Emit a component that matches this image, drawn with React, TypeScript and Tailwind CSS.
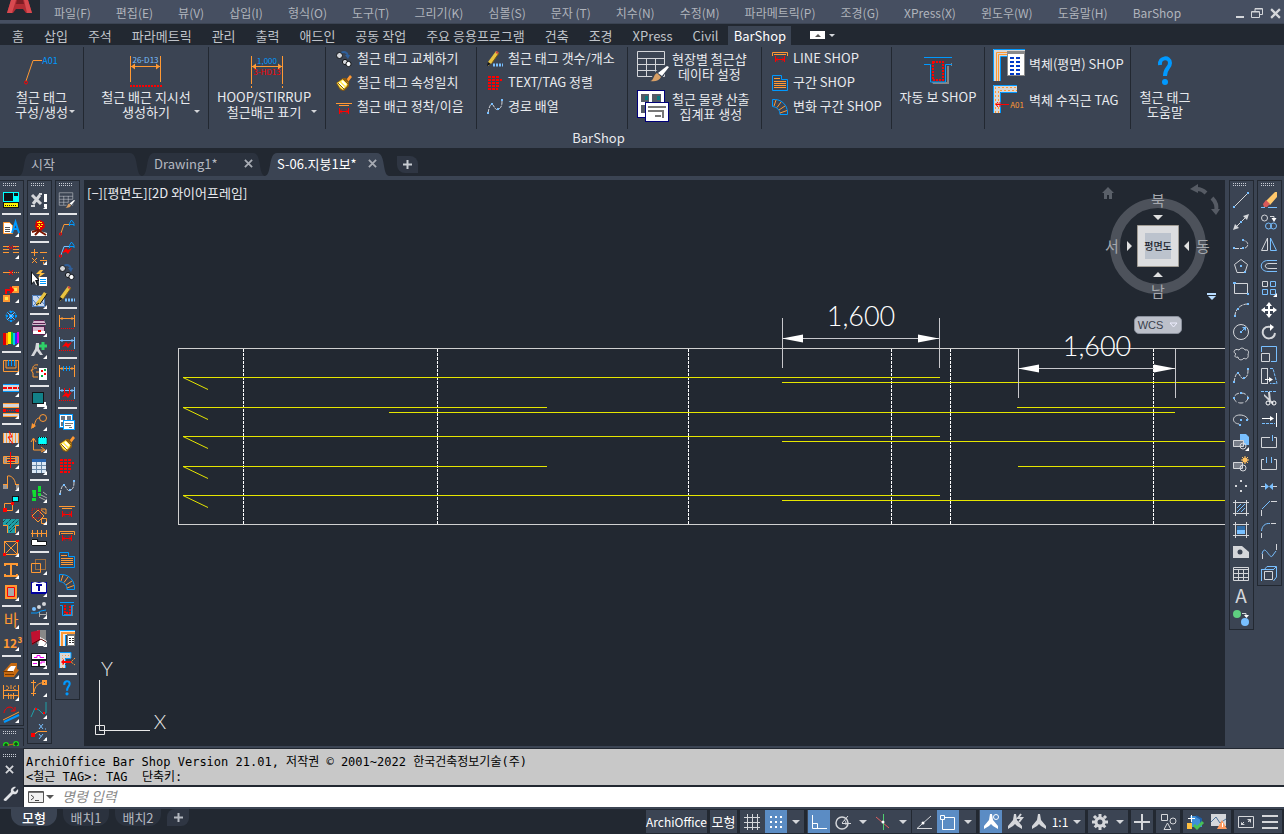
import type { ReactNode } from 'react';

const O = '#ff9933';
const R = '#ff0000';
const B = '#0099ff';
const L = '#78bfff';
const G = '#d4d6da';
const W = '#ffffff';
const K = '#111418';

// stroked path / filled path
const S = ({ c, d, w = 1, dash }: { c: string; d: string; w?: number; dash?: string }) => (
  <path d={d} stroke={c} strokeWidth={w} strokeDasharray={dash} fill="none" />
);
const F = ({ c, d }: { c: string; d: string }) => <path d={d} fill={c} />;
const T = ({ c, x, y, s, children }: { c: string; x: number; y: number; s: number; children: ReactNode }) => (
  <text x={x} y={y} fill={c} fontSize={s} textAnchor="middle">{children}</text>
);

const balls = (
  <>
    <S c="#2f5f9a" w={2} d="M5 2C8 0 11 1 12 5" />
    <F c="#2f5f9a" d="M9 4h5l-2 4z" />
    <circle cx="3.5" cy="4.5" r="3" fill={G} stroke={K} />
    <circle cx="9" cy="11" r="2.6" fill={G} stroke={K} />
    <circle cx="12.5" cy="13" r="2.6" fill={W} stroke={K} />
  </>
);
const brush = (
  <>
    <F c={O} d="M10 5l4-5 2 2-4 5z" />
    <F c="#8a5a10" d="M0 8l7-5h3l3 4v4l-5 5-4-1z" />
    <F c="#ffe94d" d="M1 8l6-4 5 4-1 3-4 4-3-2z" />
    <S c={W} w={2} d="M3 8l5 5M6 6l4 4" />
    <S c="#8a5a10" d="M2 8l6 6M7 4l5 5" />
  </>
);
const pencil = (
  <>
    <F c="#e8c341" d="M1 11L9 0l3 2-7 10-4 3z" />
    <S c="#7a5b10" d="M5 12L12 2" />
    <F c={K} d="M0 15l1-4 3 2z" />
    <S c="#c44" w={2} d="M9 1l2 1" />
    <S c={L} w={3} dash="2 1" d="M6 14h10" />
  </>
);
const bricks = <S c={R} w={2} dash="3 1" d="M1 2h12M1 5h14M1 8h12M1 11h12M1 14h10" />;
const spline = (
  <>
    <S c={G} dash="4 1" d="M1 14C2 8 4 3 6 6S9 12 12 10s3-5 3-9" />
    <F c={L} d="M0 13h2v2h-2zM4 4h2v2H4zM10 9h2v2h-2zM14 0h2v2h-2z" />
  </>
);
const splice = (
  <>
    <S c={O} d="M0 4.500h16M3 6.500h10" />
    <S c={R} d="M3.500 9v6M12.500 9v6M4 12.500h8M6 10.500l-2 2 2 2M10 10.500l2 2-2 2" />
  </>
);
const lineShop = (
  <>
    <S c={O} d="M.5 5V1.500h15V5M2 3.500h12" />
    <S c={R} d="M3.500 5v6M12.500 5v6M4 8.500h8M6 6.500l-2 2 2 2M10 6.500l2 2-2 2" />
  </>
);
const section = (
  <>
    <S c={B} d="M.5.5h9v4h6v11H.5z" />
    <S c={O} d="M2 3.500h6M2 6.500h12M2 8.500h12M2 10.500h12M2 12.500h12" />
  </>
);
const fan = (
  <>
    <S c={B} d="M.5 .5h3C10 1 15 6 15.500 13v2.500H8C8 11 5 8 .5 7.500z" />
    <S c={O} d="M4 1L2 7M9 3L5 8.500M13 7L7 11M15 11.500l-7 2.500" />
  </>
);
const tableBrush = (
  <>
    <S c={G} d="M.5 1.500h27v25H.5zM.5 8.500h27M.5 14.500h27M.5 20.500h27M9.500 8v18M18.500 8v18" />
    <F c="#3b4453" d="M19 21L29 14h3v4L23 31H12z" />
    <F c="#d9a066" d="M13 31c4 0 3-6 7-8l4 4c-2 4-6 5-11 4z" />
    <F c={W} d="M21 23L30 16l2 1-7 9z" />
  </>
);
const tables = (
  <>
    <F c="#00007a" d="M0 0h28v28H0z" />
    <F c={W} d="M1 1h26v26H1z" />
    <F c="#555c66" d="M4 4h8v8H4zM15 4h9v8h-9zM4 15h8v8H4z" />
    <F c="#0a7a80" d="M8 6h3v4H8zM20 6h3v4h-3z" />
    <F c="#00007a" d="M8 12h24v20H8z" />
    <F c={W} d="M9 13h22v18H9z" />
    <S c="#777" w={2} d="M11 17h18M11 21h16M18 26h6M26 22v6" />
  </>
);
const wall = (
  <>
    <F c="#d8d8d8" d="M0 0h32v7H8v25H0z" />
    <S c={B} d="M.5 32V.5H32M7.500 32V7.500H14" />
    <S c={O} d="M3.500 32V3.500H14M5.500 32V5.500H14" />
    <F c="#8a8a8a" d="M14 2h18v25H14z" />
    <F c={W} d="M15 5h16v21H15z" />
    <S c="#0038c8" w={2} dash="4 2" d="M17 9h12M17 13h12M17 17h12M17 21h12M17 25h12" />
  </>
);
const wallTag = (
  <>
    <F c="#d8d8d8" d="M0 0h24v7H7v21H0z" />
    <S c={B} d="M.5 28V.5H24M7.500 28V7.500H24" />
    <S c={O} dash="2 2" d="M2.500 28V2.500H24M5.500 28V5.500H24" />
    <S c={R} d="M3 19.500h13M5 17l-2 2.500 2 2.500M7 17v5" />
    <T c={O} x={24} y={23} s={8}>A01</T>
  </>
);
const beam = (
  <>
    <F c="#858585" d="M8 26h15V10h4v-3H28v3h-3v18H9z" />
    <F c="#3b4453" d="M8 8h14v18H8z" />
    <S c={B} d="M0 1.500h28M0 8.500h6.500v17.500h15V8.500H28" />
    <S c={R} w={2} dash="2 1" d="M9 6h10v18H9z" />
  </>
);
const question = (
  <>
    <S c={B} w={4} d="M3 9C2 1 13 0 13 7c0 5-5 5-5 13" />
    <circle cx="8" cy="26" r="3" fill={B} />
  </>
);
const dim = (c: string, mark: ReactNode) => (
  <>
    <S c={c} d="M.5 1v12M15.500 1v12M1 4.500h14M3 3v3M13 3v3" />
    {mark}
  </>
);
const dots = <S c={R} dash="1 1" d="M0 14.500h16" />;
const bolt = <F c={R} d="M3 11l4-5 2 2 4-2-4 6-2-2z" />;
const leader = (c: string) => (
  <>
    <S c={c} d="M2 13L5 4.500h6" />
    <S c={B} d="M10.500 6V3.500L12 .5h1l2 3V6M11 4.500h4" />
    <circle cx="1.500" cy="14" r="1.200" stroke={R} fill="none" />
  </>
);

const small: Record<string, ReactNode> = {
  screen: <><F c="#00ffff" d="M0 0h16v10H0z" /><F c={K} d="M1 1h9v8H1zM11 1h4v3h-4zM0 10h16v6H0z" /><F c="#fff200" d="M1 11h14v4H1z" /><S c={K} dash="1 1" d="M2 13.500h12" /></>,
  docText: <><F c={W} d="M.5 2.500h6l3 3v8h-9z" /><S c={O} d="M.5 2.500h6l3 3v8h-9z" /><S c="#555" d="M2 7.500h5M2 9.500h5M2 11.500h5" /><S c={B} w={2} d="M9 13l3.500-11L16 13M10 9h5" /></>,
  trim: <><S c={O} d="M0 4.500h6M0 7.500h6M0 10.500h6M10 4.500h6M10 7.500h6M10 10.500h6" /><S c={R} dash="1 1" d="M4 5.500h9M6 3l4 5M10 3L6 8" /></>,
  cutLine: <><S c={O} d="M0 8.500h8" /><S c={O} dash="1 1" d="M9 8.500h7" /><S c={R} d="M6 6l4 5M10 6l-4 5" /></>,
  moveBox: <><F c="#ffe94d" d="M0 9h7v7H0zM9 0h7v7H9z" /><S c={O} w={2} d="M1 10h5v5H1zM10 1h5v5h-5z" /><S c={R} w={2} d="M3 8V4h6M7 1l3 3-3 3" /></>,
  snow: <><S c={B} w={2} dash="2 1" d="M8 3v11M3 8h11" /><S c={L} d="M4 4l8 8M12 4l-8 8" /><circle cx="8" cy="8" r="5" stroke={B} strokeDasharray="2 1" fill="none" /></>,
  stripes: <><F c="#e00000" d="M0 3h3v12H0z" /><F c="#ff9900" d="M3 3h2v12H3z" /><F c="#fff200" d="M5 2h3v12H5z" /><F c="#00c040" d="M8 2h2v12H8z" /><F c="#00d0e0" d="M10 3h2v12h-2z" /><F c="#2030ff" d="M12 3h2v11h-2z" /><F c="#e000e0" d="M14 2h2v11h-2z" /></>,
  stirrup: <><S c={O} d="M.5 2.500h15v11H.5zM3 2v8h10V2" /><S c={B} d="M5.500 2v6M8.500 2v6M11.500 2v6" /></>,
  band: <><F c={G} d="M0 4h16v8H0z" /><S c={B} d="M0 4.500h16M0 11.500h16" /><S c={R} w={2} dash="4 1" d="M0 8h16" /></>,
  bandDots: <><F c={G} d="M0 2h16v12H0z" /><F c="#3b4453" d="M0 5h16v6H0z" /><S c={O} d="M0 1.500h16M0 5.500h16M0 11.500h16M0 14.500h16" /><S c={R} dash="1 1" d="M2 8.500h12" /><F c={R} d="M0 7h3v3H0zM13 7h3v3h-3z" /></>,
  column: <><F c={G} d="M0 3h16v10H0z" /><S c={O} d="M.5 3v10M3.500 3v10M12.500 3v10M15.500 3v10M6.500 3v10M9.500 3v10" /><S c={R} d="M6 1l3 6H5l5 7" /></>,
  wallCut: <><F c="#999" d="M0 5h4v6H0zM12 5h4v6h-4z" /><S c={O} d="M.5 4.500h15v7H.5zM3 6.500h10v3H3z" /><S c={R} d="M7.500 0v16M5 8.500h7" /></>,
  door: <><F c="#999" d="M0 10h5v5H0zM13 10h3v5h-3z" /><S c={O} d="M4.500 14V2C8 1 12 5 12.500 10M0 10.500h5M12 10.500h4" /></>,
  boxCyan: <><S c={O} d="M1.500 7.500h8v7h-8z" /><F c={K} d="M9 0h7v6H9z" /><F c="#00ffff" d="M10 1h5v4h-5z" /><F c={R} d="M0 12h4v4H0zM8 6h3v3H8z" /></>,
  hatchT: <><F c="#1fa0a8" d="M0 1h16v6h-4v8H5V7H0z" /><S c={K} dash="1 1" d="M0 4L3 1M3 6l5-5M6 8l7-7M6 12L16 2M7 14l5-5" /><S c={O} d="M0 7.500h4.500V15M12.500 15V7.500H16" /></>,
  crossBox: <><S c={O} d="M1.500 1.500h13v13h-13zM1 1l14 14M15 1L1 15" /><F c={R} d="M13 0h3v2h-3zM0 13h3v3H0z" /></>,
  iBeam: <S c={O} w={2} d="M2 2h12M8 2v12M2 14h12M2 1v3M14 1v3M2 12v3M14 12v3" />,
  columnBox: <><F c="#aaa" d="M2 1h12v14H2z" /><S c={O} w={2} d="M3 2h10v12H3z" /><S c={R} d="M4.500 3.500h7v9h-7z" /></>,
  ba: <T c={O} x={8} y={14} s={16}>바</T>,
  num: <text x="0" y="14" fill={O} className="text-[12px] font-bold">12³</text>,
  bed: <><F c="#c76a10" d="M1 9l7-8h6v6l2 1-5 7H1z" /><F c={W} d="M5 7l3-3h5l-3 6H4z" /><S c="#7a3a00" d="M0 9.500h10M2 12.500h9" /></>,
  fence: <S c={O} d="M.5 1v14M15.500 1v14M0 6.500h16M0 11.500h16M5.500 9v6M10.500 9v6M3 2c4 0 3 4 0 4M13 2c-4 0-3 4 0 4M8 1v4M8 10v5" />,
  slope: <><S c={R} d="M1 7C2 0 10-1 11 5M8 5h4V1" /><S c={O} d="M0 14L16 6" /><S c={B} w={2} d="M1 16L16 9" /></>,
  nodes: <><circle cx="3" cy="5" r="3" fill="#18e018" /><circle cx="13" cy="4" r="3" fill="#18e018" /><S c={K} d="M3 3v4M1 5h4M13 2v4M11 4h4" /><S c="#c76a10" d="M5 5l6-1M13 6v4" /><S c={B} d="M0 9.500h12" /></>,

  cross: <><S c={G} w={3} d="M1 3l9 9M9 3L2 12" /><S c={G} w={2} d="M0 14h4M8 2h3" /><F c={W} d="M13 2h3v8h-3zM13 12h3v3h-3z" /></>,
  fire: <><F c="#e00000" d="M4 6l1-5 4-1 4 2 1 5-4 4H6z" /><S c="#fff200" dash="2 1" d="M6 2.500h6M7 4.500h6M6 6.500h6M8.500 1v9" /><F c={W} d="M0 11l4-1 5 1 7 2v3H0z" /><S c="#7a1500" w={2} d="M1 12l6-2 8 5M4 15l5-5" /></>,
  calc: <S c={O} d="M0 4.500h7M3.500 1v7M9 4.500h7M1 10l5 5M6 10l-5 5M9 12.500h7M12.500 9v2M12.500 14v2" />,
  cursor: <><F c="#ffc040" d="M9 0L5 4h4L7 8l7-5h-4l2-3z" /><F c={K} d="M0 1l9 10H6l2 4-3 1-2-4-3 3z" /><F c={W} d="M1 3l6 7H4l2 5-1 .5L3 11l-2 2z" /><F c={W} d="M8 7h8v9H8z" /><S c={B} d="M9 9.500h6M9 11.500h6M9 13.500h6" /></>,
  editBox: <><F c="#c8d8f0" d="M1 3h13v12H1z" /><S c="#4a7ab8" d="M1.500 3.500h12v11h-12zM2 8l6 7M6 4l8 9M2 14L13 4" /><F c="#e8c341" d="M5 11L13 0l3 2-7 10-4 2z" /><S c={K} d="M5 13l3-2M9 12l7-10" /></>,
  printer: <><F c="#d8b8d0" d="M3 0h10l2 5H1z" /><S c="#5a2050" d="M3 .5h10M2 3.500h12M1 6.500h13M1.500 6v6h12V6M2 14.500h13" /><F c="#d8b8d0" d="M2 7h11v4H2z" /><F c={W} d="M2 11h12v3H2z" /><S c={R} w={2} d="M7 11h3" /></>,
  compass: <><F c={G} d="M5 1h3v6l4 6h-3l-3-4-3 5H0l4-7z" /><S c="#2fd068" w={3} d="M12 0v8M8 4h8" /></>,
  face: <><S c={O} d="M7 1C3 0 1 3 2 6H0l2 3v4h5M3 4h3M5 8h3" /><F c={W} d="M8 4h8v12H8z" /><F c={R} d="M10 6h2v2h-2zM13 9h2v2h-2z" /><F c="#00b040" d="M10 11h2v2h-2zM13 5h2v2h-2z" /></>,
  block: <><F c={W} d="M6 10h9v5H6z" /><F c={K} d="M1 0h12v12H1z" /><F c="#128088" d="M2 1h10v10H2z" /></>,
  bubble: <><circle cx="12" cy="4" r="3.500" stroke={O} fill="none" /><S c={O} d="M9 4C4 4 5 8 2 14" /><F c={O} d="M0 15l1-6 4 3z" /></>,
  axis: <><F c="#00ffff" d="M7 1h9v7H7z" /><S c={K} dash="1 1" d="M7 1.500h9v7H7z" /><S c={O} d="M2.500 3v11H13M0 6l2.500-4L5 6M10 11l4 3-4 2" /></>,
  sheet: <><F c="#dce8f5" d="M1 1h14v14H1z" /><F c="#2a66b0" d="M1 1h14v3H1z" /><S c="#6888a8" d="M1 7.500h14M1 11.500h14M5.500 4v11M10.500 4v11" /></>,
  feet: <><F c="#10e030" d="M1 4h4v7H2zM1 12h4v3H1zM7 0h3v6H7zM7 7h3v3H7z" /><S c="#aaa" d="M8 11l8 4M12 6l4 3M10 9l6 3" /></>,
  rotateBox: <><S c={O} d="M7 2l6 6-6 6-6-6zM10.500 10.500h5v5h-5zM10 2l5 4V1h-5" /><S c={R} dash="1 1" d="M1 1h8v9H1z" /></>,
  dimWall: <><S c={O} d="M0 3.500h16M1.500 0v7M6.500 0v7M10.500 0v7M15.500 0v7" /><F c={W} d="M0 9h6v3h10v4H0z" /><S c={K} d="M.5 9.500h6v2h9v4H.5z" /></>,
  dotBoxes: <><S c={O} d="M.5 5.500h9v9h-9z" /><S c={O} dash="1 1" d="M4.500 1.500h10v10h-10z" /></>,
  book: <><F c="#0000a0" d="M0 2h16v12H0z" /><F c={W} d="M1 3l3-1 4 1 4-1 3 1v9H1z" /><S c="#0000a0" w={2} d="M5 5h6M8 4v7" /></>,
  slider: <><circle cx="3" cy="7" r="2" fill={L} /><circle cx="8" cy="5" r="2" fill={G} /><circle cx="13" cy="2" r="2" fill={G} /><S c={B} d="M0 11h6l4-2 5-1" /><S c="#aaa" d="M8.500 10v5M15.500 10v5M9 12.500h6" /></>,
  redBook: <><F c="#888" d="M6 0h9v14H6z" /><F c={W} d="M9 7l7 4-3 5H7z" /><F c="#c01030" d="M0 2l9-2v10l-8 5z" /><S c="#500" d="M1 14l9-5 5 3" /></>,
  magTable: <><F c={K} d="M0 1h16v14H0z" /><F c={W} d="M1 2h14v5H1zM1 9h6v5H1zM9 9h6v5H9z" /><S c="#f000f0" d="M3 5.500h3v-2h3v2h4M2 11.500h4M10 12v-2h4" /></>,
  curveAxis: <><S c={O} d="M2.500 0v16M0 2.500h5M0 13.500h5M3 12C4 6 7 3 13 2.500" /><S c={O} w={2} d="M12 1h3v3h-3z" /></>,
  poly: <><S c="#1fa0a8" d="M0 15L4 6l4 2 4 4 3-1V0" /><F c={R} d="M4 6h2v2H4zM12 10h2v2h-2z" /></>,
  xy: <><S c={O} d="M1 12l6-4.500h9" /><F c={R} d="M0 9h4v4H0z" /><S c={L} d="M8 0l4 5M12 0L8 5M14 5h1M8 10l2 2.500M12 10l-4 5M14 14.500h1" /></>,

  leader: leader(O),
  leaderEdit: <>{leader(L)}{bolt}</>,
  balls,
  pencil,
  brush,
  bricks,
  spline,
  splice,
  lineShop,
  section,
  fan,
  dim: dim(O, dots),
  dimEdit: dim(L, <>{dots}{bolt}</>),
  dimTicks: dim(O, <S c={B} d="M4.500 2v5M7.500 2v5M10.500 2v5" />),
  dimTicksEdit: dim(L, <><S c={R} d="M5.500 2v5M10.500 2v5" />{bolt}{dots}</>),
  tablesSmall: <><F c={B} d="M0 0h14v14H0z" /><F c={W} d="M1 1h12v12H1z" /><F c="#6a727e" d="M2 2h4v4H2zM8 2h4v4H8zM2 8h2v4H2z" /><F c={B} d="M4 6h12v10H4z" /><F c={W} d="M5 7h10v8H5z" /><S c="#777" d="M6 9.500h8M6 11.500h6M10 13.500h3" /></>,
  wallSmall: <><F c="#e8e8e8" d="M0 0h16v5H6v11H0z" /><S c={B} d="M.5 16V.5H16M6.500 16V5" /><S c={O} w={2} d="M3 16V3h13" /><F c="#777" d="M8 4h8v12H8z" /><F c={W} d="M9 6h6v9H9z" /><S c="#333" dash="2 1" d="M10 8.500h5M10 10.500h5M10 12.500h5" /></>,
  wallTagSmall: <><F c="#d8d8d8" d="M0 0h12v6H6v10H0z" /><S c={B} d="M.5 16V.5H12V6M6.500 12V6.500H12M6.500 13v3" /><S c={O} dash="1 2" d="M3.500 16V3.500H12" /><S c={R} w={2} d="M3 10h9" /><F c={R} d="M2 10l3-3v6z" /><S c={O} dash="2 1" d="M16 6l-4 4 4 3" /></>,
  beamSmall: <><F c="#777" d="M5 14h9V4h-2v8H5z" /><S c={B} d="M1 .5h14M1 3.500h2.500v10h9v-10H15" /><S c={R} w={2} dash="2 1" d="M6 3v8h5V3" /></>,
};

// drafting icons of the right-hand toolbars
const draw: Record<string, ReactNode> = {
  line: <><S c={G} d="M1 15L15 1" /><F c={L} d="M0 14h2v2H0zM14 0h2v2h-2z" /></>,
  xline: <><S c={G} d="M1 15L15 1" /><F c={G} d="M0 16l2-6 4 4zM16 0l-6 2 4 4z" /><F c={L} d="M7 7h2v2H7z" /></>,
  pline: <><S c={G} dash="4 1" d="M2 12.500h7c8 0 7-8 1-8" /><F c={L} d="M0 11h2v2H0zM9 3h2v2H9zM9 11h2v2H9z" /></>,
  polygon: <><S c={G} d="M8 1.500l6.500 5-2.500 8H4l-2.500-8z" /><F c={L} d="M7 7h2v2H7zM11 13h2v2h-2z" /></>,
  rect: <><S c={G} d="M1.500 3.500h13v10h-13z" /><F c={L} d="M0 2h3v2H0zM14 13h2v2h-2z" /></>,
  arc: <><S c={G} dash="4 1" d="M2 14C2 8 7 2 15 2" /><F c={L} d="M1 13h2v2H1zM4 6h2v2H4zM14 1h2v2h-2z" /></>,
  circle: <><circle cx="8" cy="8" r="7.500" stroke={G} fill="none" /><S c={L} d="M8 8l4-4" /><F c={L} d="M7 7h2v2H7zM9 3h4v4z" /></>,
  cloud: <S c={G} d="M3 8c-4-2-1-6 3-4 2-3 5-2 6 0 4-1 4 3 3 4 1 4-2 6-4 4-2 3-6 2-6-1-3 1-4-1-2-3z" />,
  spline,
  ellipse: <><ellipse cx="8" cy="8" rx="7" ry="5" stroke={G} fill="none" strokeDasharray="5 2" /><F c={L} d="M0 7h2v2H0zM14 7h2v2h-2zM7 2h2v2H7z" /></>,
  ellipseArc: <><S c={G} d="M6 12C-2 11-1 3 7 3c5 0 8 3 8 5" /><F c={L} d="M7 7h2v2H7zM13 7h2v2h-2zM6 12h2v2H6z" /></>,
  insert: <><F c={L} d="M7 0h6l3 3v8H7z" /><F c="#777d88" d="M0 6h10v7H0z" /><S c={G} d="M.5 6.500h10v6H.5z" /><circle cx="10" cy="12" r="3" stroke={G} fill="none" /></>,
  makeBlock: <><F c="#777d88" d="M0 6h10v6H0z" /><S c={G} d="M.5 6.500h9v6h-9z" /><circle cx="10" cy="12" r="3" stroke={G} fill="none" /><circle cx="12" cy="4" r="2.500" fill="#ffc060" /><S c="#ffc060" d="M12 0v8M8 4h8M9 1l6 6M15 1L9 7" /></>,
  point: <F c={G} d="M7 2h2v2H7zM2 7h2v2H2zM12 7h2v2h-2zM7 12h2v2H7z" />,
  hatch: <><S c={G} d="M2.500 0v16M13.500 0v16M0 2.500h16M0 13.500h16" /><S c={L} d="M4 8l4-4M4 12l8-8M8 12l4-4" /></>,
  gradient: <><S c={G} d="M2.500 0v16M13.500 0v16M0 2.500h16M0 13.500h16" /><F c="#2f6da8" d="M4 4h8v4H4z" /><F c={L} d="M4 8h8v4H4z" /></>,
  region: <><F c={G} d="M0 2h9l7 6v6H0z" /><circle cx="7" cy="8" r="2.500" fill="#3b4453" /></>,
  table: <S c={G} d="M.5 1.500h15v13H.5zM.5 3.500h15M0 7.500h16M0 11.500h16M5.500 4v11M10.500 4v11" />,
  text: <T c={G} x={8} y={15} s={19}>A</T>,
  match: <><circle cx="4" cy="4" r="4" fill="#5fd080" /><circle cx="12" cy="12" r="4" fill={L} /><S c={G} d="M9 3.500h4V7" /><F c={W} d="M11 5h5l-2.500 3z" /></>,
  erase: <><F c="#ffc76b" d="M5 9l9-9h2v5l-7 8z" /><F c="#d85a5a" d="M2 12l3-4 4 4-3 3H3z" /><S c={L} d="M7 15.500h9M0 15.500h4" /></>,
  copy: <><circle cx="3.500" cy="4" r="3" stroke={G} fill="none" /><S c={G} d="M9 2.500h4V6" /><F c={W} d="M10.500 4h5L13 8z" /><circle cx="7.500" cy="12" r="3" stroke={L} fill="none" /><circle cx="12.500" cy="12" r="3" stroke={L} fill="none" /></>,
  mirror: <><S c={G} d="M6.500 2v12.500H.5z" /><S c={L} d="M9.500 2v12.500h6z" /></>,
  offset: <><S c={L} d="M16 2.500H7c-9 0-9 11 0 11h9" /><S c={G} d="M16 5.500H8c-5 0-5 5 0 5h8" /></>,
  array: <><S c={G} d="M1.500 1.500h5v5h-5z" /><S c={L} d="M9.500 1.500h5v5h-5zM1.500 9.500h5v5h-5zM9.500 9.500h5v5h-5z" /></>,
  move: <><S c={W} w={2} d="M8 2v12M2 8h12" /><F c={W} d="M8 0l3 4H5zM8 16l3-4H5zM0 8l4-3v6zM16 8l-4-3v6z" /></>,
  rotate: <><S c={G} w={2} d="M10 3C3 2 1 6 2 10c2 6 11 6 12-1" /><F c={W} d="M9 0l4 3-4 4z" /></>,
  scale: <><S c={L} d="M.5 6V.5h15v15H10" /><S c={G} d="M.5 7.500h8v8h-8z" /></>,
  stretch: <><S c={G} d="M7 .5H.5v15H7M6.500 1v14" /><S c={L} dash="3 1" d="M9 .5h3l4 15H9" /><S c={W} d="M4 11.500h6" /><F c={W} d="M8 9l4 2.500L8 14z" /></>,
  cut: <><S c={L} dash="3 1" d="M0 1.500h16" /><F c={G} d="M7 2l2 0 1 9-2 1zM3 4l10 9-2 1-8-8z" /><circle cx="7" cy="13" r="2" stroke={W} fill="none" /><circle cx="13" cy="13" r="2" stroke={W} fill="none" /></>,
  extend: <><S c={W} d="M1 6.500h10M15.500 1v14" /><F c={W} d="M9 4l4 2.500L9 9z" /><S c={L} dash="3 1" d="M1 11.500h13" /></>,
  breakPt: <><S c={G} d="M9 3.500H.5v10h15v-10H13" /><S c={L} d="M11.500 1v6" /></>,
  breakTwo: <><S c={G} d="M3 3.500H.5v10h15v-10H13" /><S c={L} d="M5.500 1v6M10.500 1v6" /></>,
  join: <><S c={G} d="M0 8.500h4M12 8.500h4" /><F c={L} d="M4 5l4 3.500L4 12zM12 5L8 8.500l4 3.500z" /></>,
  chamfer: <><S c={G} d="M.5 16v-6M10 1.500h6" /><S c={L} d="M1 9l8-8" /></>,
  fillet: <><S c={G} dash="5 1" d="M.5 16V10M10 1.500h6" /><S c={L} d="M.5 9C1 4 4 1 9 1.500" /></>,
  blend: <><S c={G} d="M1.500 15V10M15.500 0v6" /><S c={L} d="M1 10C4-2 9 18 12 11l3-4" /></>,
  explode: <><S c={L} d="M3 4l3-3.500h9.500V11l-3 4M12 4l3-3" /><S c={G} d="M3.500 5.500h8v8h-8z" /><S c={L} d="M.5 4v11M0 3.500h12" /></>,
};

const big: Record<string, { box: string; node: ReactNode }> = {
  tableBrush: { box: '0 0 32 32', node: tableBrush },
  tables: { box: '0 0 32 32', node: tables },
  beam: { box: '0 0 28 29', node: beam },
  wall: { box: '0 0 32 32', node: wall },
  wallTag: { box: '0 0 32 32', node: wallTag },
  question: { box: '0 0 16 30', node: question },
};

function Glyph({ name, className = 'size-4' }: { name: string; className?: string }) {
  const entry = big[name];
  return (
    <svg viewBox={entry ? entry.box : '0 0 16 16'} className={`shrink-0 overflow-visible ${className}`} aria-hidden="true">
      {entry ? entry.node : draw[name] ?? small[name]}
    </svg>
  );
}

const Caret = ({ className = 'h-1 w-2' }: { className?: string }) => (
  <svg viewBox="0 0 8 4" className={`shrink-0 fill-[#d4d6da] ${className}`} aria-hidden="true">
    <path d="M0 0h8L4 4z" />
  </svg>
);

const Close = ({ className = 'size-[9px]' }: { className?: string }) => (
  <svg viewBox="0 0 10 10" className={className} aria-hidden="true">
    <path d="M1 1l8 8M9 1L1 9" stroke="currentColor" strokeWidth="2" />
  </svg>
);

const menus = [
  '파일(F)', '편집(E)', '뷰(V)', '삽입(I)', '형식(O)', '도구(T)', '그리기(K)', '심볼(S)', '문자 (T)', '치수(N)',
  '수정(M)', '파라메트릭(P)', '조경(G)', 'XPress(X)', '윈도우(W)', '도움말(H)', 'BarShop',
];

const ribbonTabs = [
  '홈', '삽입', '주석', '파라메트릭', '관리', '출력', '애드인', '공동 작업', '주요 응용프로그램', '건축', '조경', 'XPress', 'Civil',
];

// "|" is a separator, a trailing "+" marks a flyout
const leftBars = [
  ['screen', '|', 'docText+', 'trim+', 'cutLine+', 'moveBox+', 'snow+', 'stripes+', '|', 'stirrup+', 'band+', 'bandDots+', '|',
    'column+', 'wallCut+', 'door+', 'boxCyan+', 'hatchT+', 'crossBox+', 'iBeam+', 'columnBox+', '|', 'ba+', 'num+', '|', 'bed+', 'fence+', 'slope+'],
  ['cross+', '|', 'fire', '|', 'calc+', 'cursor', 'editBox+', '|', 'printer+', 'compass+', 'face', '|', 'block+', 'bubble+', 'axis+', 'sheet+', '|',
    'feet+', 'rotateBox+', 'dimWall', '|', 'dotBoxes+', 'book+', 'slider+', '|', 'redBook+', 'magTable+', '|', 'curveAxis+', 'poly+', 'xy+'],
  ['tableBrush', '|', 'leader', 'leaderEdit', 'balls', 'pencil', '|', 'dim', 'dimEdit', '|', 'dimTicks', 'dimTicksEdit', '|', 'tablesSmall', 'brush',
    'bricks', 'spline', 'splice', '|', 'lineShop', 'section', 'fan', '|', 'beamSmall', '|', 'wallSmall', 'wallTagSmall', '|', 'question'],
];

const rightBars = [
  ['line', 'xline', 'pline', 'polygon', 'rect', 'arc', 'circle', 'cloud', 'spline', 'ellipse', 'ellipseArc', 'insert+', 'makeBlock', 'point',
    'hatch', 'gradient', 'region', 'table', 'text', 'match'],
  ['erase', 'copy', 'mirror', 'offset', 'array+', 'move', 'rotate', 'scale', 'stretch', 'cut', 'extend', 'breakPt', 'breakTwo', 'join',
    'chamfer', 'fillet', 'blend', 'explode'],
];

const Grip = () => (
  <svg viewBox="0 0 13 8" className="ml-[3px] h-2 w-[13px] shrink-0" aria-hidden="true">
    <path d="M0 2.500h13M0 4.500h13" stroke="#c8ccd4" strokeDasharray="1 1" />
  </svg>
);

function Toolbar({ items, className = 'w-[25px] border-x' }: { items: string[]; className?: string }) {
  return (
    <div role="toolbar" className={`flex shrink-0 flex-col border-y border-[#222831] ${className}`}>
      <Grip />
      {items.map((item, i) => {
        if (item === '|') return <div key={i} className="mx-[2px] my-[2px] h-[2px] shrink-0 bg-[#e4e5e8]" />;
        const name = item.replace('+', '');
        return (
          <button key={i} type="button" aria-label={name} className="relative flex h-[22px] shrink-0 items-center pl-[3px]">
            <Glyph name={name} />
            {item.endsWith('+') && (
              <svg viewBox="0 0 4 4" className="absolute right-1 bottom-[2px] size-1 fill-white" aria-hidden="true">
                <path d="M4 0v4H0z" />
              </svg>
            )}
          </button>
        );
      })}
    </div>
  );
}

function BigButton({ label, caret, children }: { label: string; caret?: boolean; children: ReactNode }) {
  return (
    <button type="button" className="flex h-full w-full flex-col items-center pt-[5px]">
      <span className="flex h-[37px] items-center">{children}</span>
      <span className={`flex w-full items-end leading-[15px] ${caret ? 'justify-between px-2' : 'justify-center'}`}>
        {caret && <span className="w-[6px]" />}
        <span className="whitespace-pre">{label}</span>
        {caret && <Caret className="mb-[6px] h-[3px] w-[6px]" />}
      </span>
    </button>
  );
}

function SmallButtons({ items }: { items: [string, string][] }) {
  return (
    <div className="flex flex-col pl-[10px]">
      {items.map(([icon, label]) => (
        <button key={icon} type="button" className="flex h-6 items-center gap-[5px] whitespace-nowrap">
          <Glyph name={icon} />
          <span className="pb-[2px]">{label}</span>
        </button>
      ))}
    </div>
  );
}

const Panel = ({ className, children }: { className: string; children: ReactNode }) => (
  <div className={`h-[82px] shrink-0 border-r border-[#222831] ${className}`}>{children}</div>
);

function Ribbon() {
  return (
    <section className="h-[103px] shrink-0 bg-[#3b4453] text-[13px] text-[#e8eaee]">
      <div className="flex pt-[2px]">
        <Panel className="w-[84px]">
          <BigButton label={'철근 태그\n구성/생성'} caret>
            <svg viewBox="0 0 40 30" className="h-[30px] w-10" aria-hidden="true">
              <S c={O} d="M4 25L11 4.500h9" />
              <circle cx="4" cy="26.500" r="1.500" stroke={R} fill="none" />
              <T c={B} x={28} y={8} s={9}>A01</T>
            </svg>
          </BigButton>
        </Panel>
        <Panel className="w-[125px]">
          <BigButton label={'철근 배근 지시선\n생성하기'} caret>
            <svg viewBox="0 0 32 34" className="h-[34px] w-8" aria-hidden="true">
              <S c={O} d="M.5 2v26M30.500 2v26M1 12.500h29" />
              <F c={O} d="M1 12.500l4-3v6zM30 12.500l-4-3v6z" />
              <S c={R} w={2} dash="2 1" d="M0 32h32" />
              <T c={L} x={15.500} y={9} s={8}>26-D13</T>
            </svg>
          </BigButton>
        </Panel>
        <Panel className="w-[117px]">
          <BigButton label={'HOOP/STIRRUP\n철근배근 표기'} caret>
            <svg viewBox="0 0 32 34" className="h-[34px] w-8" aria-hidden="true">
              <S c={O} dash="28 2 2" d="M.5 2v32M31.500 2v32" />
              <S c={O} d="M1 12.500h30" />
              <F c={O} d="M1 12.500l4-3v6zM31 12.500l-4-3v6z" />
              <T c={B} x={16} y={10} s={8}>1,000</T>
              <T c={R} x={16} y={21} s={8}>3-HD13</T>
            </svg>
          </BigButton>
        </Panel>
        <Panel className="w-[151px]">
          <SmallButtons items={[['balls', '철근 태그 교체하기'], ['brush', '철근 태그 속성일치'], ['splice', '철근 배근 정착/이음']]} />
        </Panel>
        <Panel className="w-[151px]">
          <SmallButtons items={[['pencil', '철근 태그 갯수/개소'], ['bricks', 'TEXT/TAG 정렬'], ['spline', '경로 배열']]} />
        </Panel>
        <Panel className="w-[134px]">
          <div className="flex flex-col gap-2 pt-[3px] pl-[9px] leading-[15px]">
            <button type="button" className="flex items-center gap-[3px]">
              <Glyph name="tableBrush" className="size-8" />
              <span className="whitespace-pre">{'현장별 철근샵\n데이타 설정'}</span>
            </button>
            <button type="button" className="flex items-center gap-[3px]">
              <Glyph name="tables" className="size-8" />
              <span className="whitespace-pre">{'철근 물량 산출\n집계표 생성'}</span>
            </button>
          </div>
        </Panel>
        <Panel className="w-[130px]">
          <SmallButtons items={[['lineShop', 'LINE SHOP'], ['section', '구간 SHOP'], ['fan', '변화 구간 SHOP']]} />
        </Panel>
        <Panel className="w-[93px]">
          <BigButton label="자동 보 SHOP"><Glyph name="beam" className="h-[29px] w-7" /></BigButton>
        </Panel>
        <Panel className="w-[146px]">
          <div className="flex flex-col gap-1 pt-[2px] pl-2">
            <button type="button" className="flex items-center gap-1 whitespace-nowrap">
              <Glyph name="wall" className="size-8" />
              <span className="pb-[2px]">벽체(평면) SHOP</span>
            </button>
            <button type="button" className="flex items-center gap-1 whitespace-nowrap">
              <Glyph name="wallTag" className="size-8" />
              <span className="pb-[2px]">벽체 수직근 TAG</span>
            </button>
          </div>
        </Panel>
        <div className="h-[82px] w-[68px]">
          <BigButton label={'철근 태그\n도움말'}><Glyph name="question" className="h-[30px] w-4" /></BigButton>
        </div>
      </div>
      <div className="w-[1197px] text-center leading-[18px]">BarShop</div>
    </section>
  );
}

function FileTab({ label, active, closable, className }: { label: string; active?: boolean; closable?: boolean; className: string }) {
  const fill = active ? 'fill-[#3b4453]' : 'fill-[#2b323e]';
  return (
    <div className={`flex h-[23px] shrink-0 ${active ? 'text-white' : 'text-[#b4b8c0]'} ${className}`}>
      <svg viewBox="0 0 12 23" className={`w-3 ${fill}`} aria-hidden="true"><path d="M0 23C7 22 3 0 12 0v23z" /></svg>
      <div className={`flex flex-1 items-center justify-between pb-[2px] ${active ? 'bg-[#3b4453]' : 'bg-[#2b323e]'}`}>
        <button type="button" className="whitespace-nowrap">{label}</button>
        {closable && <button type="button" aria-label="닫기" className="text-[#a8acb4]"><Close /></button>}
      </div>
      <svg viewBox="0 0 12 23" className={`w-3 ${fill}`} aria-hidden="true"><path d="M12 23C5 22 9 0 0 0v23z" /></svg>
    </div>
  );
}

function Dimension({ x, y }: { x: number; y: number }) {
  return (
    <g>
      <path d={`M${x + 0.5} ${y - 20}v50M${x + 157.5} ${y - 20}v50`} stroke="#c8c8cc" />
      <path d={`M${x} ${y + 0.5}h157`} stroke="#c8c8cc" />
      <path d={`M${x} ${y + 0.5}l21-4v8zM${x + 157} ${y + 0.5}l-21-4v8z`} fill="#fff" />
      <text x={x + 79} y={y - 12} textAnchor="middle" fill="#fff" className="font-['Lato','Noto_Sans_CJK_KR',sans-serif] text-[27px] font-light">1,600</text>
    </g>
  );
}

// x1, y, x2
const rebars = [
  [99, 197, 856], [698, 202, 1700], [99, 227, 463], [305, 232, 1091], [933, 227, 1700], [99, 256, 856],
  [698, 261, 1700], [99, 286, 463], [934, 286, 1700], [99, 315, 856], [698, 320, 1700],
];

function Drawing() {
  return (
    <svg className="block h-full w-full" aria-label="보 배근도">
      <path d="M94.500 168.500H1700M94.500 344.500H1700M94.500 168v177" stroke="#d0d0d0" fill="none" />
      {[159, 353, 604, 807, 866, 1069].map((x) => (
        <path key={x} d={`M${x + 0.5} 169v175`} stroke="#fff" strokeDasharray="3 1" />
      ))}
      {rebars.map(([x1, y, x2]) => (
        <path key={`${x1}-${y}`} d={`M${x1} ${y + 0.5}H${x2}`} stroke="#e6e600" />
      ))}
      {[197, 227, 256, 286, 315].map((y) => (
        <path key={y} d={`M99 ${y + 0.5}l25 12`} stroke="#e6e600" />
      ))}
      <Dimension x={698} y={158} />
      <Dimension x={934} y={188} />
      <path d="M15.500 500v50.500H66M11.500 545.500h9v9h-9z" stroke="#e8e8e8" fill="none" />
      <text x="23" y="496" textAnchor="middle" fill="#e8e8e8" className="font-['Lato',sans-serif] text-xl font-light">Y</text>
      <text x="76" y="549" textAnchor="middle" fill="#e8e8e8" className="font-['Lato',sans-serif] text-xl font-light">X</text>
    </svg>
  );
}

function ViewCube() {
  return (
    <svg viewBox="0 0 141 130" className="absolute top-0 right-0 h-[130px] w-[141px] text-[15px]" aria-label="뷰큐브">
      <path d="M18 13l6-6 6 6h-2v6h-3v-4h-2v4h-3v-6z" fill="#5a6069" />
      <circle cx="74" cy="66" r="43" stroke="#4d525b" strokeWidth="10" fill="none" />
      <g fill="#a5a8ae" textAnchor="middle">
        <text x="74" y="26">북</text>
        <text x="28" y="72">서</text>
        <text x="119" y="72">동</text>
        <text x="74" y="117">남</text>
      </g>
      <path d="M69 35h10l-5 5zM69 97h10l-5-5zM43 61v10l5-5zM105 61v10l-5-5z" fill="#e0e0e0" />
      <path d="M53.500 45.500h41v41h-41z" fill="#dcdddf" stroke="#a09c94" />
      <path d="M61 53h26v26H61z" fill="#bcc3cd" />
      <text x="74" y="70" textAnchor="middle" fill="#20242c" className="text-[10px] font-medium">평면도</text>
      <path d="M113 9c4 0 6 1 9 4M128 18c4 4 5 9 4 13" stroke="#565b64" strokeWidth="4" fill="none" />
      <path d="M106 9l8-5v9zM127 29h9l-4 6z" fill="#565b64" />
      <path d="M123 113h9v2h-9zM124 116h8l-4 4z" fill="#b8dcff" />
    </svg>
  );
}

function StatusIcon({ label, active, children }: { label: string; active?: boolean; children: ReactNode }) {
  return (
    <button type="button" aria-label={label} className={`flex w-6 items-center justify-center ${active ? 'border-x border-[#3b4453] bg-[#5b8cc4]' : ''}`}>
      <svg viewBox="0 0 16 16" className="size-4 shrink-0 overflow-visible" aria-hidden="true">{children}</svg>
    </button>
  );
}

const StatusCaret = () => (
  <button type="button" aria-label="목록" className="flex w-4 items-center justify-center"><Caret /></button>
);

const person = 'M7 0h2l1 6 5 6v3l-5-3-2-2-2 2-5 3v-3l5-6z';

function StatusBar() {
  const group = 'flex h-[23px] bg-[#3b4453]';
  return (
    <div className="ml-auto flex shrink-0 gap-[3px] pt-px pr-[2px] text-white">
      <div className={`${group} w-[61px] items-center justify-center text-xs`}>ArchiOffice</div>
      <button type="button" className={`${group} w-[27px] items-center justify-center text-[13px]`}>모형</button>
      <div className={group}>
        <StatusIcon label="그리드"><S c={G} d="M3.500 0v16M8.500 0v16M13.500 0v16M0 3.500h16M0 8.500h16M0 13.500h16" /></StatusIcon>
        <StatusIcon label="스냅" active><F c={W} d="M2 2h2v2H2zM7 2h2v2H7zM12 2h2v2h-2zM2 7h2v2H2zM7 7h2v2H7zM12 7h2v2h-2zM2 12h2v2H2zM7 12h2v2H7zM12 12h2v2h-2z" /></StatusIcon>
        <StatusCaret />
      </div>
      <div className={group}>
        <StatusIcon label="직교" active><S c={W} d="M1.500 1v13.500H16M1 9.500h5.500V14" /></StatusIcon>
        <StatusIcon label="극좌표"><circle cx="7" cy="9" r="6" stroke={G} fill="none" strokeWidth="1.500" /><S c={G} d="M7 9.500h9M7 9l6-7M9 6c2 1 2 2 2 5" /></StatusIcon>
        <StatusCaret />
        <StatusIcon label="등각"><S c="#e06060" d="M1 3l13 11" /><S c="#50d070" d="M8.500 0v16" /><circle cx="8" cy="8" r="1.500" fill={W} /></StatusIcon>
        <StatusCaret />
        <div className="w-px bg-[#222831]" />
        <StatusIcon label="추적"><S c={G} d="M15 2L1 14.500h15" /><circle cx="7" cy="9" r="1.500" fill={W} /></StatusIcon>
        <StatusIcon label="객체 스냅" active><S c={W} d="M5 3.500h9.500v12H2.500V6" /><S c={W} d="M.5 1.500h4v4h-4z" /></StatusIcon>
        <StatusCaret />
      </div>
      <div className={group}>
        <StatusIcon label="주석 가시성" active><F c={W} d={person} /><circle cx="13" cy="3" r="2.500" stroke={W} fill="#5b8cc4" /></StatusIcon>
        <StatusIcon label="자동 축척"><F c={G} d={person} /><S c={G} w={2} d="M14 0l-3 4h4l-3 4" /></StatusIcon>
        <StatusIcon label="축척"><F c={G} d={person} /></StatusIcon>
        <span className="flex w-[18px] items-center justify-center text-xs">1:1</span>
        <StatusCaret />
      </div>
      <div className={group}>
        <StatusIcon label="설정"><circle cx="8" cy="8" r="4" stroke={G} strokeWidth="3" fill="none" /><S c={G} w={3} dash="3 10" d="M8 0v16M0 8h16M2 2l12 12M14 2L2 14" /></StatusIcon>
        <StatusCaret />
      </div>
      <div className={`${group} w-[22px]`}><StatusIcon label="추가"><S c={G} w={2} d="M8 0v16M0 8h16" /></StatusIcon></div>
      <div className={group}>
        <StatusIcon label="분리"><S c={G} d="M1.500.5h6v6h-6zM4 15.500h7L7.500 9z" /><circle cx="13" cy="7" r="3" stroke={G} fill="none" /></StatusIcon>
      </div>
      <div className={group}>
        <StatusIcon label="그래픽"><F c="#3f8fd8" d="M3 2h7l5 4v7H5z" /><S c={W} d="M1 4.500h7M4.500 1v7" /><S c="#1d5ea8" w={2} d="M9 2l5 3v4" /><F c="#ffc040" d="M0 9h5v6H0z" /><S c="#48c058" w={3} d="M7 11l3 3 6-6" /></StatusIcon>
        <StatusIcon label="성능"><F c={G} d="M0 0h15v12H0z" /><S c="#4d7298" d="M0 8l5-5 4 6 6-4" /><F c="#ff9c60" d="M11 6l5 9H6z" /><S c={W} d="M11.500 9v4" /></StatusIcon>
      </div>
      <div className={group}>
        <StatusIcon label="전체 화면"><S c={G} d="M.5 2.500h15v11H.5zM3 11l3-3M10 8l3-3" /><F c={G} d="M3 8v3h4zM9 5h4v4z" /></StatusIcon>
        <StatusIcon label="사용자화"><S c={G} w={2} d="M0 2h16M0 8h16M0 14h16" /></StatusIcon>
      </div>
    </div>
  );
}

const layoutTabs = ['모형', '배치1', '배치2'];

export default function App() {
  return (
    <div className="flex h-screen flex-col overflow-hidden bg-[#222831] font-['Noto_Sans_CJK_KR',sans-serif] text-[13px]">
      {/* Menu bar */}
      <header className="flex h-6 shrink-0 items-start border-b border-[#3b4453] bg-[#464f61] text-[#b0b4bc]">
        <svg viewBox="0 0 40 20" className="h-5 w-10 shrink-0 bg-[#222831]" aria-label="AutoCAD">
          <path d="M11 0L7 13h6l3-4h7l3 4h6L28 0z" fill="#b02c34" />
          <path d="M11 0L7 13h5l4-13zM24 0l3 13h5L28 0z" fill="#d84a50" />
          <path d="M17 0h6l1 4h-8z" fill="#7c1c24" />
        </svg>
        <nav className="flex gap-[25px] pl-[14px]">
          {menus.map((m) => <button key={m} type="button" className="text-xs leading-[26px] whitespace-nowrap">{m}</button>)}
        </nav>
        <div className="ml-auto flex items-center gap-[7px] pt-[7px] pr-[3px] text-[#d4d6da]">
          <button type="button" aria-label="최소화" className="mt-2 h-[2px] w-2 bg-[#d4d6da]" />
          <button type="button" aria-label="복원">
            <svg viewBox="0 0 12 12" className="size-3" aria-hidden="true"><path d="M4 4.500V1.500h7.500v6H9M.5 4.500h8v6h-8zM4 2h7M1 5h7" stroke="currentColor" fill="none" /></svg>
          </button>
          <button type="button" aria-label="닫기"><Close className="size-[11px]" /></button>
        </div>
      </header>

      {/* Ribbon tabs */}
      <nav className="flex h-[21px] shrink-0 items-end pl-[2px] text-[#c0c4ca]">
        {ribbonTabs.map((t) => <button key={t} type="button" className="h-[19px] px-[10px] leading-4 whitespace-nowrap">{t}</button>)}
        <button type="button" className="h-[19px] w-[63px] bg-[#3b4453] leading-4 text-white">BarShop</button>
        <button type="button" aria-label="리본 최소화" className="mb-[6px] ml-[19px] flex h-2 w-[15px] items-center justify-center bg-white">
          <svg viewBox="0 0 6 3" className="h-[3px] w-[6px]" aria-hidden="true"><path d="M0 3l3-3 3 3z" fill="#555" /></svg>
        </button>
        <Caret className="mb-2 ml-1 h-[3px] w-[6px]" />
      </nav>

      <Ribbon />

      {/* File tabs */}
      <div className="flex h-8 shrink-0 items-end border-b-4 border-[#3b4453] pl-[19px]">
        <FileTab label="시작" className="w-[123px]" />
        <FileTab label="Drawing1*" closable className="w-[123px]" />
        <FileTab label="S-06.지붕1보*" active closable className="w-[124px]" />
        <button type="button" aria-label="새 탭" className="mb-[3px] ml-2 flex h-[17px] w-[21px] items-center justify-center rounded-tr-lg rounded-bl-lg bg-[#2f3643]">
          <svg viewBox="0 0 9 9" className="size-[9px]" aria-hidden="true"><path d="M4.500 0v9M0 4.500h9" stroke="#c8ccd2" strokeWidth="2" /></svg>
        </button>
      </div>

      {/* Workspace */}
      <main className="flex min-h-0 flex-1 overflow-hidden">
        <div className="flex w-[84px] shrink-0 items-start gap-[3px] bg-[#3b4453]">
          <div className="flex flex-col gap-[2px]">
            <Toolbar items={leftBars[0]} className="w-6 border-r" />
            <Toolbar items={['nodes']} className="w-6 border-r" />
          </div>
          <Toolbar items={leftBars[1]} />
          <Toolbar items={leftBars[2]} />
        </div>
        <div className="relative min-w-0 flex-1">
          <Drawing />
          <div className="absolute top-[5px] left-[3px] text-[13px] leading-4 text-[#e8eaee]">[−][평면도][2D 와이어프레임]</div>
          <ViewCube />
          <button type="button" className="absolute top-[136px] right-[43px] flex h-[18px] w-12 items-center justify-center gap-[6px] rounded-[5px] border border-[#8a909c] bg-[#bcc0ca] font-['Liberation_Sans',sans-serif] text-[11px] text-[#3a404c]">
            WCS
            <svg viewBox="0 0 9 6" className="h-[6px] w-[9px]" aria-hidden="true"><path d="M1 1h7L4.500 5z" fill="none" stroke="#eef" /></svg>
          </button>
        </div>
        <div className="flex w-[59px] shrink-0 items-start gap-[3px] bg-[#3b4453] pl-1">
          {rightBars.map((items) => <Toolbar key={items[0]} items={items} />)}
        </div>
      </main>

      {/* Command line */}
      <section className="flex shrink-0 border-t-2 border-[#3b4453]">
        <div className="flex w-[23px] shrink-0 flex-col bg-[#2f3643] pt-1 text-[#d4d6da]">
          <Grip />
          <button type="button" aria-label="닫기" className="mt-[5px] ml-[5px]"><Close /></button>
          <button type="button" aria-label="사용자화" className="mt-3 ml-[3px]">
            <svg viewBox="0 0 16 16" className="size-4" aria-hidden="true">
              <path d="M1 13l7-7c-1-3 2-6 5-5l-3 3 2 2 3-3c1 4-2 6-5 5l-7 7c-2 0-3-1-2-2z" fill="#e0e2e6" />
            </svg>
          </button>
        </div>
        <div className="min-w-0 flex-1 pt-px pl-px">
          <div className="h-9 bg-[#c8c8c8] pt-[6px] pl-[2px] font-['DejaVu_Sans_Mono','Noto_Sans_CJK_KR',monospace] text-xs leading-[15px] whitespace-pre text-black">
            {'ArchiOffice Bar Shop Version 21.01, 저작권 © 2001~2022 한국건축정보기술(주)\n<철근 TAG>: TAG  단축키:'}
          </div>
          <div className="mt-[2px] flex h-5 items-center bg-white pl-1">
            <svg viewBox="0 0 26 12" className="h-3 w-[26px] shrink-0" aria-hidden="true">
              <path d="M.5.5h15v11H.5z" fill="#f0f0f0" stroke="#555" />
              <path d="M1 1.500h14" stroke="#777" />
              <path d="M3 4l3 2.500L3 9M7 9.500h4" stroke="#444" fill="none" />
              <path d="M18 4h8l-4 4z" fill="#555" />
            </svg>
            <input type="text" aria-label="명령" placeholder="명령 입력" className="ml-2 h-5 min-w-0 flex-1 pb-[2px] text-sm italic outline-none placeholder:text-[#8a8a8a]" />
          </div>
        </div>
      </section>

      {/* Layout tabs and status bar */}
      <footer className="flex h-[27px] shrink-0 border-t-2 border-[#3b4453]">
        <div className="flex h-[17px] gap-[6px] pl-[11px] leading-[13px]">
          {layoutTabs.map((t, i) => (
            <button key={t} type="button" className={`w-[46px] rounded-b-xl ${i === 0 ? 'bg-[#3b4453] font-medium text-white' : 'bg-[#2b323e] text-[#b4b8c0]'}`}>{t}</button>
          ))}
          <button type="button" aria-label="새 배치" className="flex w-[22px] items-center justify-center rounded-tl-lg rounded-br-lg bg-[#2f3643]">
            <svg viewBox="0 0 9 9" className="size-[9px]" aria-hidden="true"><path d="M4.500 0v9M0 4.500h9" stroke="#b4b8c0" strokeWidth="2" /></svg>
          </button>
        </div>
        <StatusBar />
      </footer>
    </div>
  );
}
